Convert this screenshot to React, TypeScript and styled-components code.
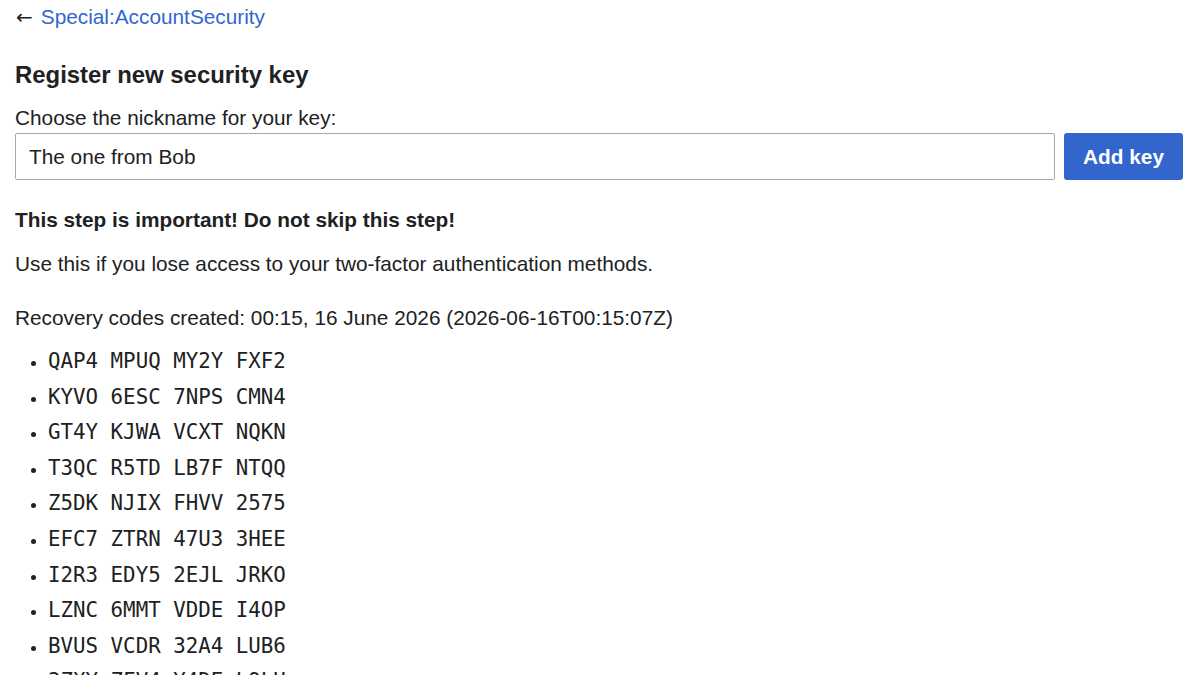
import React from "react";
import styled, { createGlobalStyle } from "styled-components";

const GlobalStyle = createGlobalStyle`
  html, body {
    margin: 0;
    padding: 0;
    background: #ffffff;
  }
  body {
    font-family: "Liberation Sans", Arial, sans-serif;
    color: #202122;
    overflow: hidden;
  }
`;

const Page = styled.div`
  padding: 4px 17px 0 15px;
  height: 675px;
  box-sizing: border-box;
  overflow: hidden;
`;

const BackLine = styled.div`
  font-size: 20.8px;
  line-height: 26px;
  display: flex;
  align-items: center;
  gap: 8px;
`;

const Arrow = styled.span`
  color: #202122;
  font-family: "DejaVu Sans", sans-serif;
  font-size: 20px;
  margin-left: 1px;
`;

const BackLink = styled.a`
  color: #3366cc;
  text-decoration: none;
`;

const Heading = styled.h2`
  margin: 30px 0 0;
  font-size: 23.9px;
  line-height: 30px;
  font-weight: bold;
`;

const Label = styled.label`
  display: block;
  margin-top: 14px;
  font-size: 20.8px;
  line-height: 28px;
`;

const FieldRow = styled.div`
  display: flex;
  gap: 9px;
  margin-top: 1px;
`;

const TextInput = styled.input`
  flex: 1;
  height: 47px;
  box-sizing: border-box;
  border: 1px solid #a2a9b1;
  border-radius: 2px;
  padding: 0 13px;
  font-family: "Liberation Sans", Arial, sans-serif;
  font-size: 20.8px;
  color: #202122;
  outline: none;
`;

const PrimaryButton = styled.button`
  width: 119px;
  height: 47px;
  border: none;
  border-radius: 3px;
  background: #3366cc;
  color: #ffffff;
  font-family: "Liberation Sans", Arial, sans-serif;
  font-weight: bold;
  font-size: 20.8px;
  cursor: pointer;
`;

const Warning = styled.p`
  margin: 27px 0 0;
  font-size: 20.8px;
  font-weight: bold;
  line-height: 26px;
`;

const Paragraph = styled.p<{ $gap: number }>`
  margin: ${(p) => p.$gap}px 0 0;
  font-size: 20.8px;
  line-height: 28px;
`;

const CodeList = styled.ul`
  margin: 12px 0 0;
  padding: 0 0 0 33px;
  list-style: disc;
`;

const CodeItem = styled.li`
  font-family: "DejaVu Sans Mono", Menlo, monospace;
  font-size: 20.8px;
  line-height: 35.6px;
  color: #202122;
  &::marker {
    font-size: 17px;
  }
`;

const codes = [
  "QAP4 MPUQ MY2Y FXF2",
  "KYVO 6ESC 7NPS CMN4",
  "GT4Y KJWA VCXT NQKN",
  "T3QC R5TD LB7F NTQQ",
  "Z5DK NJIX FHVV 2575",
  "EFC7 ZTRN 47U3 3HEE",
  "I2R3 EDY5 2EJL JRKO",
  "LZNC 6MMT VDDE I4OP",
  "BVUS VCDR 32A4 LUB6",
  "3ZXY ZFV4 Y4DE L9LH",
];

export default function App() {
  return (
    <>
      <GlobalStyle />
      <Page>
        <BackLine>
          <Arrow>←</Arrow>
          <BackLink href="#">Special:AccountSecurity</BackLink>
        </BackLine>
        <Heading>Register new security key</Heading>
        <Label htmlFor="nickname">Choose the nickname for your key:</Label>
        <FieldRow>
          <TextInput id="nickname" defaultValue="The one from Bob" />
          <PrimaryButton>Add key</PrimaryButton>
        </FieldRow>
        <Warning>This step is important! Do not skip this step!</Warning>
        <Paragraph $gap={17}>
          Use this if you lose access to your two-factor authentication methods.
        </Paragraph>
        <Paragraph $gap={26}>
          Recovery codes created: 00:15, 16 June 2026 (2026-06-16T00:15:07Z)
        </Paragraph>
        <CodeList>
          {codes.map((c) => (
            <CodeItem key={c}>{c}</CodeItem>
          ))}
        </CodeList>
      </Page>
    </>
  );
}
